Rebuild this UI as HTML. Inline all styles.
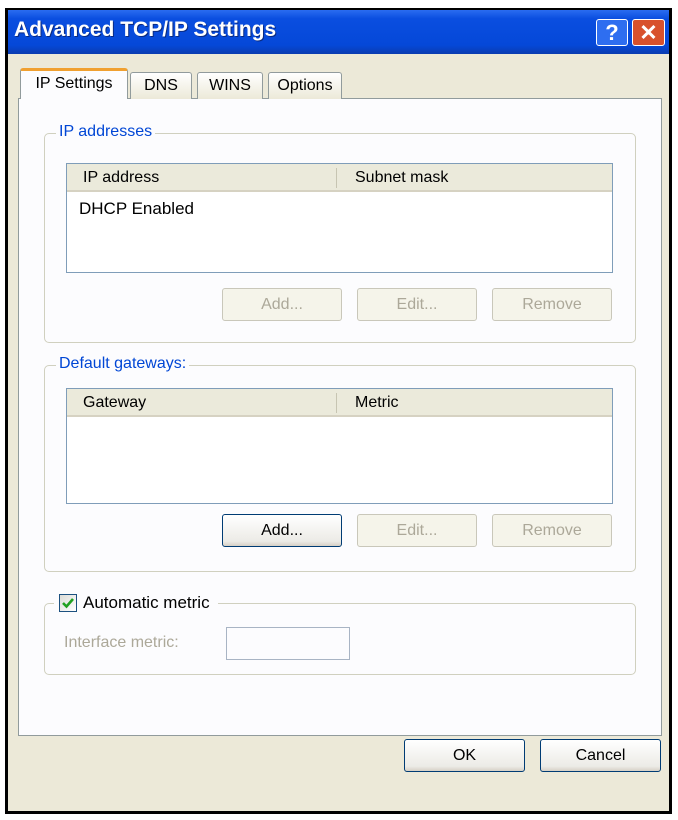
<!DOCTYPE html>
<html><head><style>
*{box-sizing:border-box;margin:0;padding:0}
body{width:678px;height:820px;background:#fff;position:relative;overflow:hidden;font-family:"Liberation Sans",sans-serif;font-size:16px;color:#000}
.a{position:absolute}
.win{left:5px;top:8px;width:667px;height:806px;background:#000}
.title{left:8px;top:10px;width:661px;height:44px;background:linear-gradient(#2a6cf0,#0a4ee0 20%,#0548d8 80%,#0a3cb0);}
.body{left:8px;top:54px;width:661px;height:757px;background:#ece9d8}
.panel{left:18px;top:98px;width:644px;height:638px;background:#fcfcfe;border:1px solid #919b9c}
.tab{top:72px;height:27px;background:linear-gradient(#fff,#ece9d8);border:1px solid #919b9c;border-bottom:none;border-radius:3px 3px 0 0;text-align:center;line-height:26px}
.grp{border:1px solid #d0d0bf;border-radius:5px}
.leg{background:#fcfcfe;color:#0046d5;padding:0 3px;line-height:18px}
.list{background:#fff;border:1px solid #7f9db9}
.hdr{left:0;top:0;right:0;height:28px;background:#ebeadb;border-bottom:2px solid #d6d2c2}
.btn{height:33px;border:1px solid #c9c7ba;border-radius:3px;background:#f5f4ea;color:#aca899;text-align:center;line-height:31px}
.btn.on{border:1px solid #003c74;color:#000;background:linear-gradient(#fff,#ecebe6 85%,#d6d0c5)}
</style></head><body>
<div class="a win"></div>
<div class="a title"></div>
<div class="a" style="left:14px;top:18px;color:#fff;font-weight:bold;font-size:21px;text-shadow:1px 1px #0a2a80">Advanced TCP/IP Settings</div>
<div class="a" style="left:596px;top:19px;width:32px;height:27px;border:1px solid #fff;border-radius:3px;background:#2e6ef0;color:#fff;font-weight:bold;font-size:22px;text-align:center;line-height:25px">?</div>
<div class="a" style="left:632px;top:19px;width:33px;height:27px;border:1px solid #fff;border-radius:3px;background:#d8512c;color:#fff;font-weight:bold;font-size:22px;text-align:center;line-height:25px">✕</div>
<div class="a body"></div>
<div class="a panel"></div>
<div class="a tab" style="left:20px;top:68px;width:108px;height:31px;background:#fcfcfe;border-top:3px solid #f0a030;line-height:26px">IP Settings</div>
<div class="a tab" style="left:130px;width:62px">DNS</div>
<div class="a tab" style="left:197px;width:66px">WINS</div>
<div class="a tab" style="left:268px;width:74px">Options</div>

<div class="a grp" style="left:44px;top:133px;width:592px;height:210px"></div>
<div class="a leg" style="left:56px;top:123px">IP addresses</div>
<div class="a list" style="left:66px;top:163px;width:547px;height:110px">
 <div class="a hdr"><span class="a" style="left:16px;top:5px">IP address</span><span class="a" style="left:269px;top:4px;height:20px;border-left:1px solid #c7c5b2"></span><span class="a" style="left:288px;top:5px">Subnet mask</span></div>
 <span class="a" style="left:12px;top:35px;font-size:17px">DHCP Enabled</span>
</div>
<div class="a btn" style="left:222px;top:288px;width:120px">Add...</div>
<div class="a btn" style="left:357px;top:288px;width:120px">Edit...</div>
<div class="a btn" style="left:492px;top:288px;width:120px">Remove</div>

<div class="a grp" style="left:44px;top:365px;width:592px;height:207px"></div>
<div class="a leg" style="left:56px;top:355px">Default gateways:</div>
<div class="a list" style="left:66px;top:388px;width:547px;height:116px">
 <div class="a hdr"><span class="a" style="left:16px;top:5px">Gateway</span><span class="a" style="left:269px;top:4px;height:20px;border-left:1px solid #c7c5b2"></span><span class="a" style="left:288px;top:5px">Metric</span></div>
</div>
<div class="a btn on" style="left:222px;top:514px;width:120px">Add...</div>
<div class="a btn" style="left:357px;top:514px;width:120px">Edit...</div>
<div class="a btn" style="left:492px;top:514px;width:120px">Remove</div>

<div class="a grp" style="left:44px;top:603px;width:592px;height:72px"></div>
<div class="a leg" style="left:54px;top:593px;width:164px;height:22px"></div>
<div class="a" style="left:59px;top:594px;width:18px;height:18px;border:1px solid #1c5180;background:linear-gradient(135deg,#dcdcd7,#fff)"><svg width="16" height="16" viewBox="0 0 16 16"><path d="M3 8 L6.5 11.5 L13 4" stroke="#21a121" stroke-width="2.6" fill="none"/></svg></div>
<div class="a" style="left:83px;top:593px;line-height:20px;font-size:17px">Automatic metric</div>
<div class="a" style="left:64px;top:634px;color:#aca899">Interface metric:</div>
<div class="a" style="left:226px;top:627px;width:124px;height:33px;border:1px solid #a8b4c4;background:#fcfcfe"></div>

<div class="a btn on" style="left:404px;top:739px;width:121px">OK</div>
<div class="a btn on" style="left:540px;top:739px;width:121px">Cancel</div>
</body></html>
